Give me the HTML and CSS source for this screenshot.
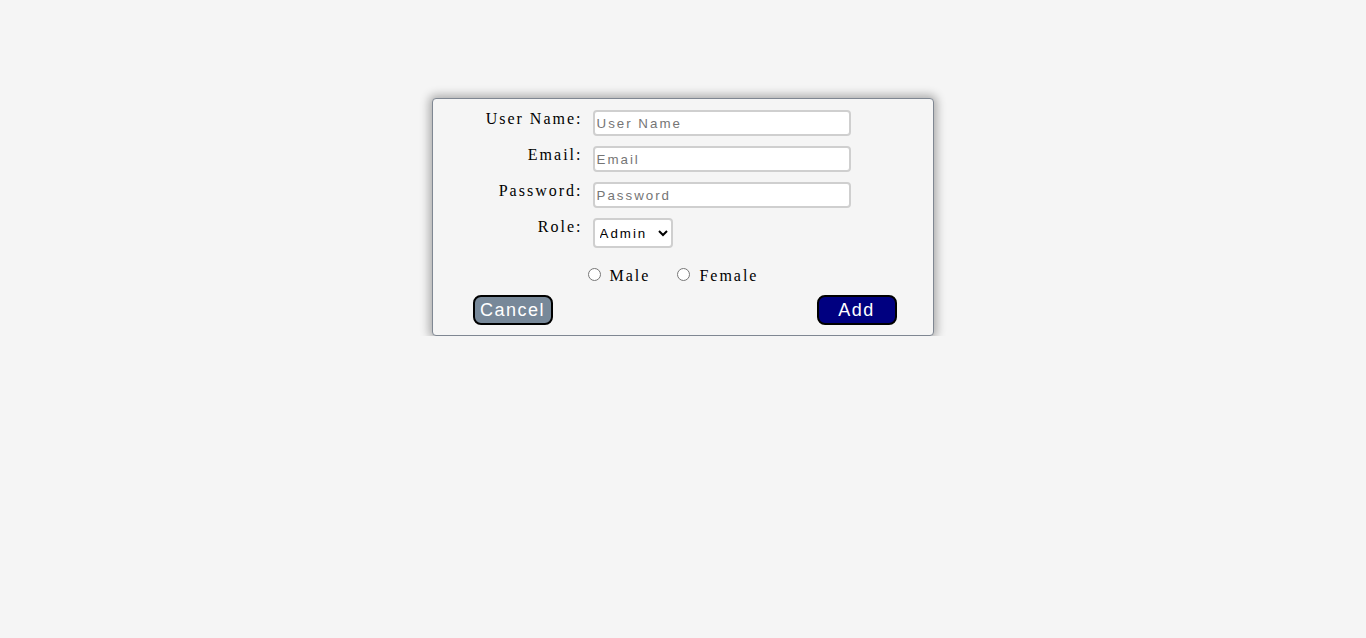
FILE: index.html
```html
<!DOCTYPE html>
<html>
<head>
<meta charset="utf-8">
<link rel="stylesheet" href="styles.css">
</head>
<body>
<div class="page">
  <form class="card">
    <div class="grid">
      <label class="lbl" for="un">User Name:</label>
      <input class="field" id="un" type="text" placeholder="User Name">
      <label class="lbl" for="em">Email:</label>
      <input class="field" id="em" type="text" placeholder="Email">
      <label class="lbl" for="pw">Password:</label>
      <input class="field" id="pw" type="password" placeholder="Password">
      <label class="lbl" for="role">Role:</label>
      <div class="selwrap">
        <select class="sel" id="role">
          <option>Admin</option>
          <option>User</option>
        </select>
      </div>
    </div>
    <div class="radios">
      <label class="radio"><input type="radio" name="g"><span>Male</span></label>
      <label class="radio"><input type="radio" name="g"><span>Female</span></label>
    </div>
    <div class="buttons">
      <button type="button" class="btn cancel">Cancel</button>
      <button type="button" class="btn add">Add</button>
    </div>
  </form>
</div>
</body>
</html>
```
FILE: styles.css
```css
html, body {
  margin: 0;
  padding: 0;
  background: #f5f5f5;
}
body {
  font-family: "Liberation Serif", "Times New Roman", serif;
  font-size: 16px;
  letter-spacing: 2px;
}
.page {
  display: flex;
  justify-content: center;
  padding-top: 98px;
  padding-right: 1px;
}
.card {
  width: 500px;
  border: 1px solid #7f8792;
  border-radius: 4px;
  background: #f5f5f5;
  box-shadow: 0 0 10px 3px rgba(0, 0, 0, 0.3);
  padding: 11px 0 10px 0;
  box-sizing: content-box;
}
.grid {
  display: grid;
  grid-template-columns: 150px 258px;
  column-gap: 10px;
  row-gap: 10px;
  align-items: start;
}
.lbl {
  text-align: right;
  line-height: 18px;
}
.field {
  box-sizing: border-box;
  width: 258px;
  height: 26px;
  margin: 0;
  border: 2px solid #cfcfcf;
  border-radius: 4px;
  background: #fff;
  padding: 0 2px;
  font-family: "Liberation Sans", Arial, sans-serif;
  font-size: 13.33px;
  letter-spacing: 2px;
  outline: none;
}
.field::placeholder {
  color: #757575;
}
.selwrap {
  display: flex;
}
.sel {
  box-sizing: border-box;
  width: 80px;
  height: 30px;
  margin: 0;
  border: 2px solid #cfcfcf;
  border-radius: 4px;
  background: #fff;
  padding: 0 2px 0 1px;
  font-family: "Liberation Sans", Arial, sans-serif;
  font-size: 13.33px;
  letter-spacing: 2px;
  color: #000;
}
.radios {
  display: flex;
  gap: 22px;
  padding-left: 150px;
  margin-top: 19px;
  line-height: 18px;
}
.radio {
  display: flex;
  align-items: baseline;
}
.radio input {
  margin: 0 9px 0 5px;
  width: 13px;
  height: 13px;
}
.buttons {
  display: flex;
  justify-content: space-between;
  padding: 0 36px 0 40px;
  margin-top: 10px;
}
.btn {
  box-sizing: border-box;
  width: 80px;
  height: 30px;
  border: 2px solid #000;
  border-radius: 8px;
  color: #fff;
  font-family: "Liberation Sans", Arial, sans-serif;
  font-size: 18px;
  letter-spacing: 1.5px;
  padding: 0;
  line-height: 26px;
}
.cancel {
  background: #778899;
}
.add {
  background: #000080;
}
```
